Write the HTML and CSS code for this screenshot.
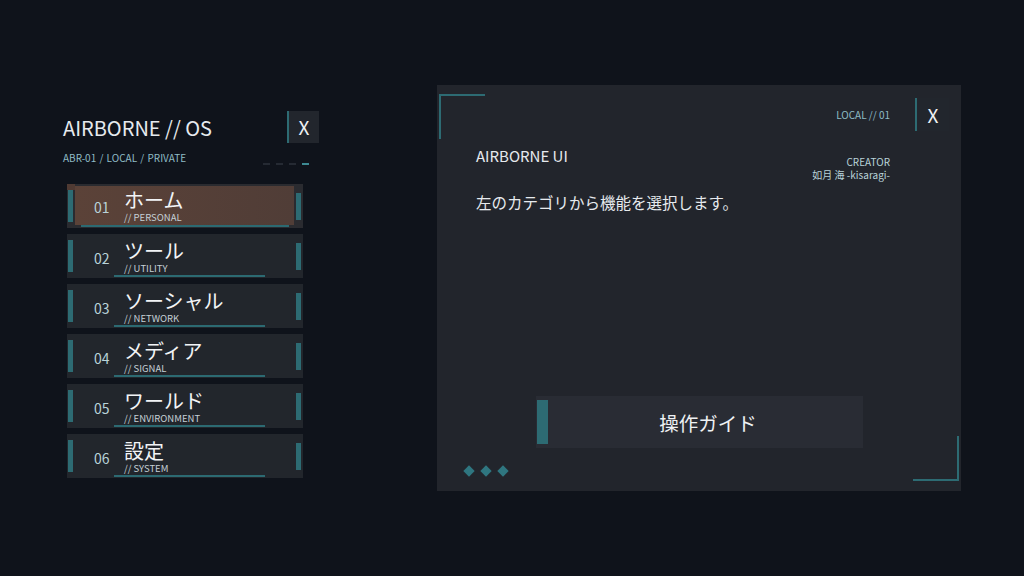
FILE: index.html
```html
<!DOCTYPE html>
<html lang="ja">

<head>
  <meta charset="UTF-8">
  <meta name="viewport" content="width=device-width, initial-scale=1.0">
  <title>AIRBORNE // OS</title>
  <link rel="stylesheet" href="styles.css">
</head>

<body>
  <div class="screen">
    <aside class="side">
      <div class="side-head">
        <h1>AIRBORNE // OS</h1>
        <button type="button" class="close">X</button>
      </div>
      <div class="side-sub">
        <span>ABR-01 / LOCAL / PRIVATE</span>
        <div class="dashes"><i></i><i></i><i></i><i class="on"></i></div>
      </div>

      <ul class="menu">
        <li class="item active">
          <span class="bar"></span>
          <div class="item-body">
            <span class="num">01</span>
            <div class="label">
              <span class="jp">ホーム</span>
              <span class="en">// PERSONAL</span>
            </div>
          </div>
          <span class="bar right"></span>
        </li>
        <li class="item">
          <span class="bar"></span>
          <div class="item-body">
            <span class="num">02</span>
            <div class="label">
              <span class="jp">ツール</span>
              <span class="en">// UTILITY</span>
            </div>
          </div>
          <span class="bar right"></span>
        </li>
        <li class="item">
          <span class="bar"></span>
          <div class="item-body">
            <span class="num">03</span>
            <div class="label">
              <span class="jp">ソーシャル</span>
              <span class="en">// NETWORK</span>
            </div>
          </div>
          <span class="bar right"></span>
        </li>
        <li class="item">
          <span class="bar"></span>
          <div class="item-body">
            <span class="num">04</span>
            <div class="label">
              <span class="jp">メディア</span>
              <span class="en">// SIGNAL</span>
            </div>
          </div>
          <span class="bar right"></span>
        </li>
        <li class="item">
          <span class="bar"></span>
          <div class="item-body">
            <span class="num">05</span>
            <div class="label">
              <span class="jp">ワールド</span>
              <span class="en">// ENVIRONMENT</span>
            </div>
          </div>
          <span class="bar right"></span>
        </li>
        <li class="item">
          <span class="bar"></span>
          <div class="item-body">
            <span class="num">06</span>
            <div class="label">
              <span class="jp">設定</span>
              <span class="en">// SYSTEM</span>
            </div>
          </div>
          <span class="bar right"></span>
        </li>
      </ul>
    </aside>

    <section class="panel">
      <span class="corner tl"></span>
      <span class="corner br"></span>

      <div class="panel-top">
        <span class="tag">LOCAL // 01</span>
        <button type="button" class="close">X</button>
      </div>

      <div class="panel-head">
        <h2>AIRBORNE UI</h2>
        <div class="creator">
          <span>CREATOR</span>
          <span>如月 海 -kisaragi-</span>
        </div>
      </div>
      <p class="desc">左のカテゴリから機能を選択します。</p>

      <button type="button" class="guide">
        <span class="guide-bar"></span>
        <span class="guide-text">操作ガイド</span>
      </button>

      <div class="diamonds"><i></i><i></i><i></i></div>
    </section>
  </div>
</body>

</html>
```

FILE: styles.css
```css
body {
  margin: 0;
  background-color: #0f131b;
  color: #e6eaee;
  font-family: "Noto Sans CJK JP", "Noto Sans", sans-serif;
}

.screen {
  display: flex;
  align-items: flex-start;
  width: 1024px;
  height: 576px;
  padding: 0 63px;
  box-sizing: border-box;
}

button {
  font-family: inherit;
  cursor: pointer;
}

/* left column */
.side {
  width: 256px;
  margin-top: 111px;
}

.side-head {
  display: flex;
  justify-content: space-between;
  align-items: center;
}

.side-head h1 {
  margin: 0;
  font-size: 20px;
  font-weight: 400;
}

.close {
  width: 32px;
  height: 32px;
  padding: 0;
  border: none;
  border-left: 2px solid #2d6b73;
  background-color: #22262d;
  color: #eef1f3;
  font-size: 19px;
  line-height: 32px;
}

.side-sub {
  display: flex;
  justify-content: space-between;
  align-items: flex-end;
  margin-top: 7px;
  font-size: 10px;
  word-spacing: 1px;
  color: #8fbcc6;
}

.dashes {
  display: flex;
  gap: 6px;
  margin-right: 10px;
}

.dashes i {
  display: block;
  width: 7px;
  height: 2px;
  background-color: #252a33;
}

.dashes i.on {
  background-color: #3d8a93;
}

.menu {
  list-style: none;
  margin: 19px 0 0 4px;
  padding: 0;
  width: 236px;
  display: flex;
  flex-direction: column;
  gap: 6px;
}

.item {
  display: flex;
  align-items: center;
  height: 44px;
  background-color: #22262c;
  position: relative;
}

.item .bar {
  width: 5px;
  height: 32px;
  margin-left: 1px;
  background-color: #2d6b73;
}

.item .bar.right {
  height: 27px;
  margin-left: auto;
  margin-right: 2px;
}

.item-body {
  display: flex;
  align-items: center;
  height: 100%;
  padding-top: 3px;
  box-sizing: border-box;
}

.num {
  width: 30px;
  margin-left: 21px;
  font-size: 14px;
  color: #b9d3d9;
}

.label {
  display: flex;
  flex-direction: column;
}

.jp {
  font-size: 20px;
  line-height: 20px;
  color: #f2f4f6;
}

.en {
  margin-top: 2px;
  font-size: 9.5px;
  line-height: 11px;
  color: #c5d0d6;
}

/* underline under each entry */
.item::after {
  content: "";
  position: absolute;
  left: 47px;
  bottom: 1px;
  width: 151px;
  height: 2px;
  background-color: #2c6a72;
}

.item.active {
  background-color: #2a2b30;
}

.item.active .item-body {
  height: 39px;
  width: 219px;
  margin-left: 2px;
  margin-top: -1px;
  padding-top: 2px;
  background: linear-gradient(90deg, #5b4238, #503d37);
}

.item.active .item-body .num {
  margin-left: 19px;
}

.item.active::before {
  content: "";
  position: absolute;
  left: 0;
  top: 0;
  width: 8px;
  height: 6px;
  background-color: #4f3a33;
}

.item.active::after {
  left: 14px;
  width: 208px;
}

/* right panel */
.panel {
  position: relative;
  width: 524px;
  height: 406px;
  margin-top: 85px;
  margin-left: auto;
  background-color: #22252c;
  display: flex;
  flex-direction: column;
}

.corner {
  position: absolute;
  width: 44px;
  height: 43px;
  border: 0 solid #2d6b73;
}

.corner.tl {
  left: 2px;
  top: 9px;
  border-top-width: 2px;
  border-left-width: 2px;
}

.corner.br {
  right: 2px;
  bottom: 10px;
  border-bottom-width: 2px;
  border-right-width: 2px;
}

.panel-top {
  display: flex;
  justify-content: flex-end;
  align-items: center;
  gap: 25px;
  margin: 13px 12px 0 0;
}

.panel-top .close {
  width: 34px;
  height: 33px;
  line-height: 33px;
}

.tag {
  font-size: 10px;
  color: #8fbcc6;
}

.panel-head {
  display: flex;
  justify-content: space-between;
  align-items: flex-start;
  margin: 11px 71px 0 39px;
}

.panel-head h2 {
  margin: 3px 0 0;
  font-size: 15px;
  font-weight: 400;
}

.creator {
  display: flex;
  flex-direction: column;
  align-items: flex-end;
  margin-top: 13px;
  font-size: 10px;
  line-height: 13px;
  color: #b9d3d9;
}

.desc {
  margin: 10px 0 0 39px;
  font-size: 15.5px;
}

.guide {
  display: flex;
  align-items: center;
  align-self: center;
  width: 327px;
  height: 52px;
  margin-top: 183px;
  padding: 0;
  border: none;
  background-color: #292c34;
  color: #eef1f3;
}

.guide-bar {
  width: 11px;
  height: 44px;
  margin-left: 1px;
  background-color: #2d6b73;
}

.guide-text {
  flex: 1;
  text-align: center;
  font-size: 19.5px;
  padding-left: 6px;
}

.diamonds {
  display: flex;
  gap: 9px;
  margin: 19px 0 0 28px;
}

.diamonds i {
  display: block;
  width: 8px;
  height: 8px;
  background-color: #2f7680;
  transform: rotate(45deg);
}
```
